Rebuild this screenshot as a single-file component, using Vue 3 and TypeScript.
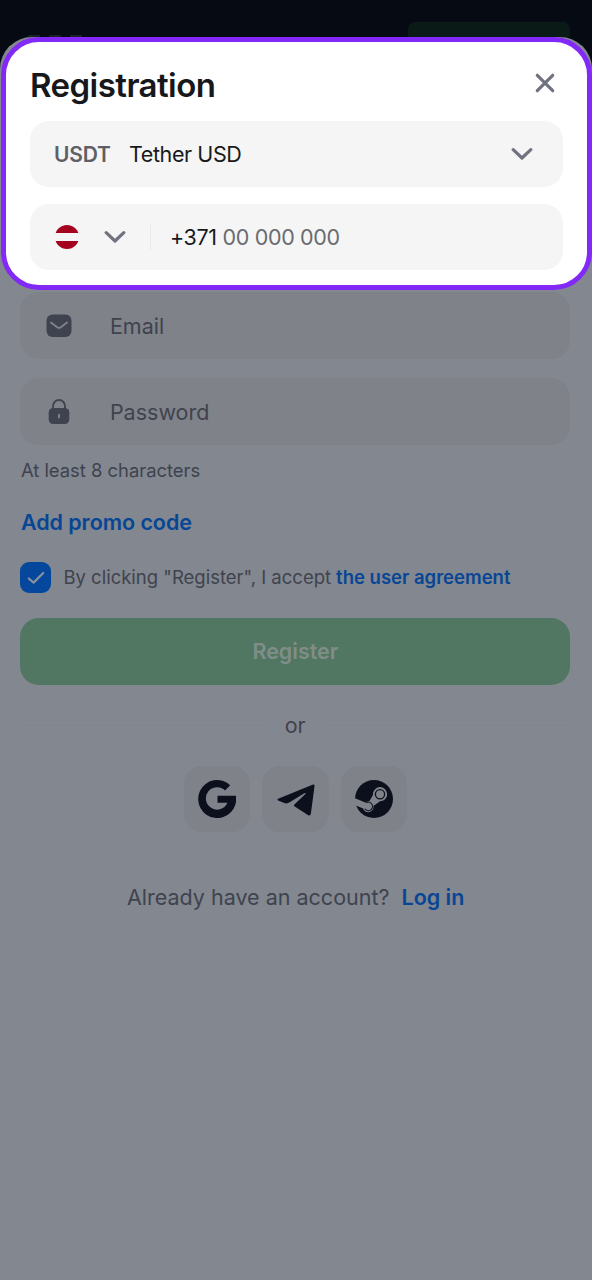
<script setup lang="ts">
import { ref } from 'vue'

const currency = ref({ code: 'USDT', name: 'Tether USD' })
const dialCode = ref('+371')
const accepted = ref(true)
</script>

<template>
  <div class="page">
    <header class="topbar">
      <div class="brand"><i></i><i></i><i></i></div>
      <div class="topbar-button"></div>
    </header>
    <main class="sheet">
      <section class="card">
        <div class="card-head">
          <h1>Registration</h1>
          <svg class="close" viewBox="0 0 20 20"><path d="M2.3 2.3 17.7 17.7M17.7 2.3 2.3 17.7" /></svg>
        </div>
        <div class="select">
          <span class="code">{{ currency.code }}</span>
          <span class="name">{{ currency.name }}</span>
          <svg class="chevron" viewBox="0 0 22 14"><path d="M2.2 2.7 11 11 19.8 2.7" /></svg>
        </div>
        <div class="select phone">
          <svg class="flag" viewBox="0 0 24 24">
            <circle cx="12" cy="12" r="12" fill="#a4031f" />
            <path d="M0 8H24V16H0z" fill="#f5f5f5" />
          </svg>
          <svg class="chevron" viewBox="0 0 22 14"><path d="M2.2 2.7 11 11 19.8 2.7" /></svg>
          <span class="rule"></span>
          <span class="dial">{{ dialCode }}</span>
          <span class="number">00 000 000</span>
        </div>
      </section>

      <form class="form" @submit.prevent>
        <div class="field">
          <svg class="field-icon" viewBox="0 0 26 26">
            <rect x="0.5" y="1.5" width="25" height="22.5" rx="6" fill="#3f4350" />
            <path d="M5 9.5 11.2 14.2Q13 15.5 14.8 14.2L21 9.5" fill="none" stroke="#80838a" stroke-width="1.8" stroke-linecap="round" />
          </svg>
          <span class="rule"></span>
          <span class="placeholder">Email</span>
        </div>
        <div class="field password">
          <svg class="field-icon" viewBox="0 0 26 26">
            <path d="M7 12V7a6 6 0 0 1 12 0V12" fill="none" stroke="#3f4350" stroke-width="1.8" />
            <rect x="2.7" y="8.9" width="20.6" height="16.2" rx="4.5" fill="#3f4350" />
            <path d="M13 15.6V18.6" stroke="#80838a" stroke-width="1.9" stroke-linecap="round" />
          </svg>
          <span class="rule"></span>
          <span class="placeholder">Password</span>
        </div>
        <p class="hint">At least 8 characters</p>
        <a class="promo">Add promo code</a>
        <div class="agree">
          <span class="checkbox">
            <svg v-if="accepted" viewBox="0 0 20 16"><path d="M2.8 8.5 7.6 12.6 17.2 3" /></svg>
          </span>
          <span class="terms">By clicking "Register", I accept</span>
          <a class="link">the user agreement</a>
        </div>
        <button class="register"><span>Register</span></button>
        <div class="divider"><i></i><span>or</span><i></i></div>
        <div class="socials">
          <div class="social">
            <svg viewBox="0 0 38 38">
              <path d="M32.2 5.2A19 19 0 1 0 37.9 15.8H19.5v7H29.4A11.2 11.2 0 1 1 27 10.5z" fill="#0b101c" />
            </svg>
          </div>
          <div class="social">
            <svg viewBox="0 0 38 38">
              <path d="M1.1 18.7 35.5 4.7Q37.8 3.8 37.5 6.3L33.9 33.4Q33.4 36.4 30.9 34.9L17.7 26.4Q16.4 25.5 17.6 24.3L28.2 14.2C29.4 12.7 28.1 12.6 26.9 13.5L12.3 22.6Q9.9 24 7.3 23L1.2 20.6Q-.4 19.6 1.1 18.7z" fill="#0b101c" />
            </svg>
          </div>
          <div class="social">
            <svg viewBox="0 0 38 38">
              <circle cx="19" cy="19" r="19" fill="#0b101c" />
              <path d="M-.5 18 10.3 22.6Q12.3 21.3 14.2 21.6L18 15A7.1 7.1 0 1 1 25 21.3L18.4 26A5.3 5.3 0 0 1 8.1 28.4L.2 25.2z" fill="#80838a" />
              <circle cx="25" cy="14.2" r="4.6" fill="none" stroke="#0b101c" stroke-width="1.3" />
              <path d="M11 22.9A4.2 4.2 0 1 1 9.9 28.8" fill="none" stroke="#0b101c" stroke-width="1.1" />
            </svg>
          </div>
        </div>
        <div class="login"><span>Already have an account?</span><a>Log in</a></div>
      </form>
    </main>
  </div>
</template>

<style>
body {
  background: #060a13;
}
</style>

<style scoped>
* {
  box-sizing: border-box;
}
.page {
  width: 592px;
  height: 1280px;
  overflow: hidden;
  display: flex;
  flex-direction: column;
  background: #060a13;
  font-family: Inter, "Liberation Sans", sans-serif;
  font-size: 21.5px;
  color: #3f434e;
  white-space: nowrap;
}
.topbar {
  height: 37px;
  flex: none;
  display: flex;
  justify-content: space-between;
  align-items: flex-end;
  padding: 0 22px 0 28px;
}
.brand {
  display: flex;
  gap: 9px;
}
.brand i {
  width: 12px;
  height: 2px;
  background: #1c2029;
}
.topbar-button {
  width: 162px;
  height: 15px;
  border-radius: 7px 7px 0 0;
  background: #0a1a17;
}
.sheet {
  flex: 1;
  padding: 0 0 0 1px;
  background: #838790;
  border-radius: 32px 32px 0 0;
}
.card {
  width: 591px;
  height: 253px;
  border: 5px solid #8329f7;
  border-radius: 38px;
  background: #fff;
  padding: 0 24px;
}
.card-head {
  height: 79px;
  display: flex;
  justify-content: space-between;
  align-items: center;
  padding: 2px 8px 0 0;
}
h1 {
  margin: 4px 0 0;
  font-size: 33px;
  line-height: 40px;
  font-weight: 600;
  letter-spacing: -0.55px;
  color: #17181b;
}
svg {
  display: block;
  flex: none;
}
.close {
  width: 20px;
  height: 20px;
}
.close path,
.chevron path {
  fill: none;
  stroke: #70737f;
  stroke-width: 3.2;
  stroke-linecap: round;
  stroke-linejoin: round;
}
.select {
  height: 66px;
  display: flex;
  align-items: center;
  padding: 0 30.5px 0 24px;
  border-radius: 19px;
  background: #f5f5f5;
  color: #19191b;
}
.phone {
  margin-top: 17px;
}
.code {
  width: 75px;
  font-size: 21px;
  font-weight: 600;
  letter-spacing: -0.2px;
  color: #5e6065;
}
.name {
  flex: 1;
  letter-spacing: -0.4px;
}
.chevron {
  width: 22px;
  height: 14px;
}
.flag {
  width: 24px;
  height: 24px;
  margin: 0 25px 0 0.5px;
}
.phone .rule {
  width: 1px;
  height: 25px;
  margin: 0 19px 0 24.5px;
  background: #e9e9ea;
}
.dial {
  letter-spacing: -0.4px;
}
.number {
  margin-left: 6px;
  letter-spacing: -0.35px;
  color: #696b6f;
}
.form {
  padding: 2px 22px 0 19.4px;
}
.field {
  width: 550px;
  height: 67px;
  display: flex;
  align-items: center;
  padding-left: 25.5px;
  border-radius: 19px;
  background: #7f8289;
}
.password {
  margin-top: 19px;
}
.field-icon {
  width: 26px;
  height: 26px;
}
.field .rule {
  width: 1px;
  height: 25px;
  margin: 0 19px 0 18px;
  background: #7d8088;
}
.hint {
  margin: 13px 0 0 0.5px;
  font-size: 18.4px;
  line-height: 24px;
}
.promo {
  display: block;
  margin: 26px 0 0 0.5px;
  line-height: 28px;
  font-weight: 600;
  letter-spacing: -0.05px;
  color: #074694;
}
.agree {
  display: flex;
  align-items: center;
  height: 31px;
  margin-top: 26px;
  font-size: 18.5px;
}
.agree .terms,
.agree .link {
  margin-bottom: 1px;
}
.checkbox {
  width: 31px;
  height: 31px;
  display: flex;
  align-items: center;
  justify-content: center;
  margin-right: 12px;
  border-radius: 9px;
  background: #04479c;
}
.checkbox svg {
  width: 20px;
  height: 16px;
}
.checkbox path {
  fill: none;
  stroke: #8a929f;
  stroke-width: 2.2;
  stroke-linecap: round;
  stroke-linejoin: round;
}
.link {
  margin-left: 5px;
  font-weight: 600;
  color: #074694;
}
.register {
  display: block;
  width: 550px;
  height: 67.5px;
  margin-top: 24.5px;
  padding: 0;
  border: 0;
  border-radius: 19px;
  background: #517662;
  color: #808e89;
  font: inherit;
  font-weight: 600;
}
.divider {
  display: flex;
  align-items: center;
  gap: 18px;
  height: 28px;
  margin-top: 26px;
}
.divider i {
  flex: 1;
  height: 1px;
  background: #80848c;
}
.socials {
  display: flex;
  justify-content: center;
  gap: 12px;
  margin: 26.5px 0 0 1px;
}
.social {
  width: 66.5px;
  height: 66px;
  display: grid;
  place-items: center;
  border-radius: 18px;
  background: #7f8289;
}
.social svg {
  width: 38px;
  height: 38px;
}
.login {
  display: flex;
  justify-content: center;
  gap: 12px;
  margin: 51px 0 0 1px;
  line-height: 28px;
}
.login a {
  font-weight: 600;
  color: #074694;
}
</style>
